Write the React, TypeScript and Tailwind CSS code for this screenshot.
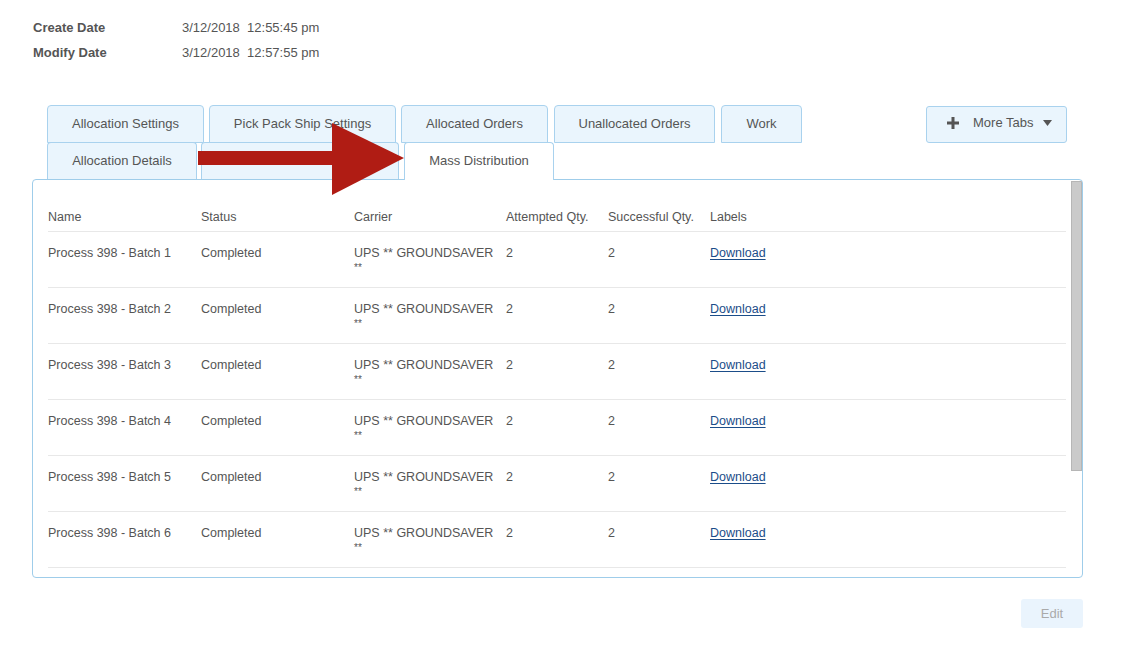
import React from 'react';

const tabBase =
  'flex h-[38px] items-center justify-center rounded-t-[4px] border border-[#a9d2ee] bg-[#eaf5fd] text-[13px] text-[#555]';

const rows = [1, 2, 3, 4, 5, 6].map((n) => ({
  name: `Process 398 - Batch ${n}`,
  status: 'Completed',
  attempted: '2',
  successful: '2',
}));

function Arrow() {
  return (
    <svg
      className="pointer-events-none absolute left-[198px] top-[122px] z-20"
      width="208"
      height="74"
      viewBox="0 0 208 74"
    >
      <rect x="0" y="29" width="136" height="14" fill="#b01c14" />
      <polygon points="134,1 206,36 134,73" fill="#b01c14" />
    </svg>
  );
}

export default function App() {
  return (
    <div className="relative min-h-[661px] bg-white font-['Liberation_Sans',Arial,sans-serif] text-[12.5px] text-[#555]">
      {/* dates */}
      <div className="pl-[33px] pt-[20px] text-[13px]">
        <div className="flex h-[25px] leading-[16px]">
          <span className="w-[149px] font-bold">Create Date</span>
          <span>3/12/2018&nbsp;&nbsp;12:55:45 pm</span>
        </div>
        <div className="flex h-[25px] leading-[16px]">
          <span className="w-[149px] font-bold">Modify Date</span>
          <span>3/12/2018&nbsp;&nbsp;12:57:55 pm</span>
        </div>
      </div>

      {/* tabs */}
      <div className="ml-[47px] mr-[56px] mt-[35px]">
        <div className="flex items-start">
          <div className={`${tabBase} w-[157px]`}>Allocation Settings</div>
          <div className={`${tabBase} ml-[5px] w-[187px]`}>Pick Pack Ship Settings</div>
          <div className={`${tabBase} ml-[5px] w-[147px]`}>Allocated Orders</div>
          <div className={`${tabBase} ml-[6px] w-[161px]`}>Unallocated Orders</div>
          <div className={`${tabBase} ml-[6px] w-[81px]`}>Work</div>
          <button className="ml-auto mt-px flex h-[37px] w-[141px] items-center rounded-[3px] border border-[#a9d2ee] bg-[#eaf5fd] pb-[4px] pl-[20px] text-[13px] text-[#555]">
            <svg width="12" height="12" viewBox="0 0 12 12">
              <rect x="4.5" y="0" width="3" height="12" fill="#555" />
              <rect x="0" y="4.5" width="12" height="3" fill="#555" />
            </svg>
            <span className="ml-[14px]">More Tabs</span>
            <svg width="9" height="6" viewBox="0 0 9 6" className="ml-[10px]">
              <polygon points="0,0 9,0 4.5,6" fill="#555" />
            </svg>
          </button>
        </div>
        <div className="-mt-px flex items-start">
          <div className={`${tabBase} w-[150px] border-b-0 pb-[2px]`}>Allocation Details</div>
          <div className={`${tabBase} ml-[4px] w-[198px] border-b-0`}></div>
          <div className={`${tabBase} relative z-10 ml-[5px] w-[150px] border-b-0 !bg-white pb-[2px]`}>
            Mass Distribution
          </div>
        </div>
      </div>

      {/* panel */}
      <div className="relative mx-[40px] -mt-px ml-[32px] h-[399px] overflow-hidden rounded-[4px] border border-[#9fcdea] bg-white pl-[15px] pr-[16px]">
        <div className="grid grid-cols-[153px_153px_152px_102px_102px_1fr] border-b border-[#e8e8e8] pb-[6px] pt-[29px] leading-[16px]">
          <span>Name</span>
          <span>Status</span>
          <span>Carrier</span>
          <span>Attempted Qty.</span>
          <span>Successful Qty.</span>
          <span>Labels</span>
        </div>
        {rows.map((r) => (
          <div
            key={r.name}
            className="grid h-[56px] grid-cols-[153px_153px_152px_102px_102px_1fr] border-b border-[#e8e8e8] pt-[14px] leading-[14px]"
          >
            <span>{r.name}</span>
            <span>{r.status}</span>
            <span className="pr-[6px]">
              UPS ** GROUNDSAVER
              <br />
              <span className="text-[10px]">**</span>
            </span>
            <span>{r.attempted}</span>
            <span>{r.successful}</span>
            <span>
              <a href="#" className="text-[#1b4d89] underline underline-offset-2">
                Download
              </a>
            </span>
          </div>
        ))}
        <div className="absolute right-0 top-px h-[290px] w-[11px] border border-[#b6b6b6] bg-[#cacaca]" />
      </div>

      <div className="mr-[40px] mt-[21px] flex justify-end">
        <button className="h-[29px] w-[62px] rounded-[3px] bg-[#eaf4fd] text-[13px] text-[#aaa]">Edit</button>
      </div>

      <Arrow />
    </div>
  );
}
